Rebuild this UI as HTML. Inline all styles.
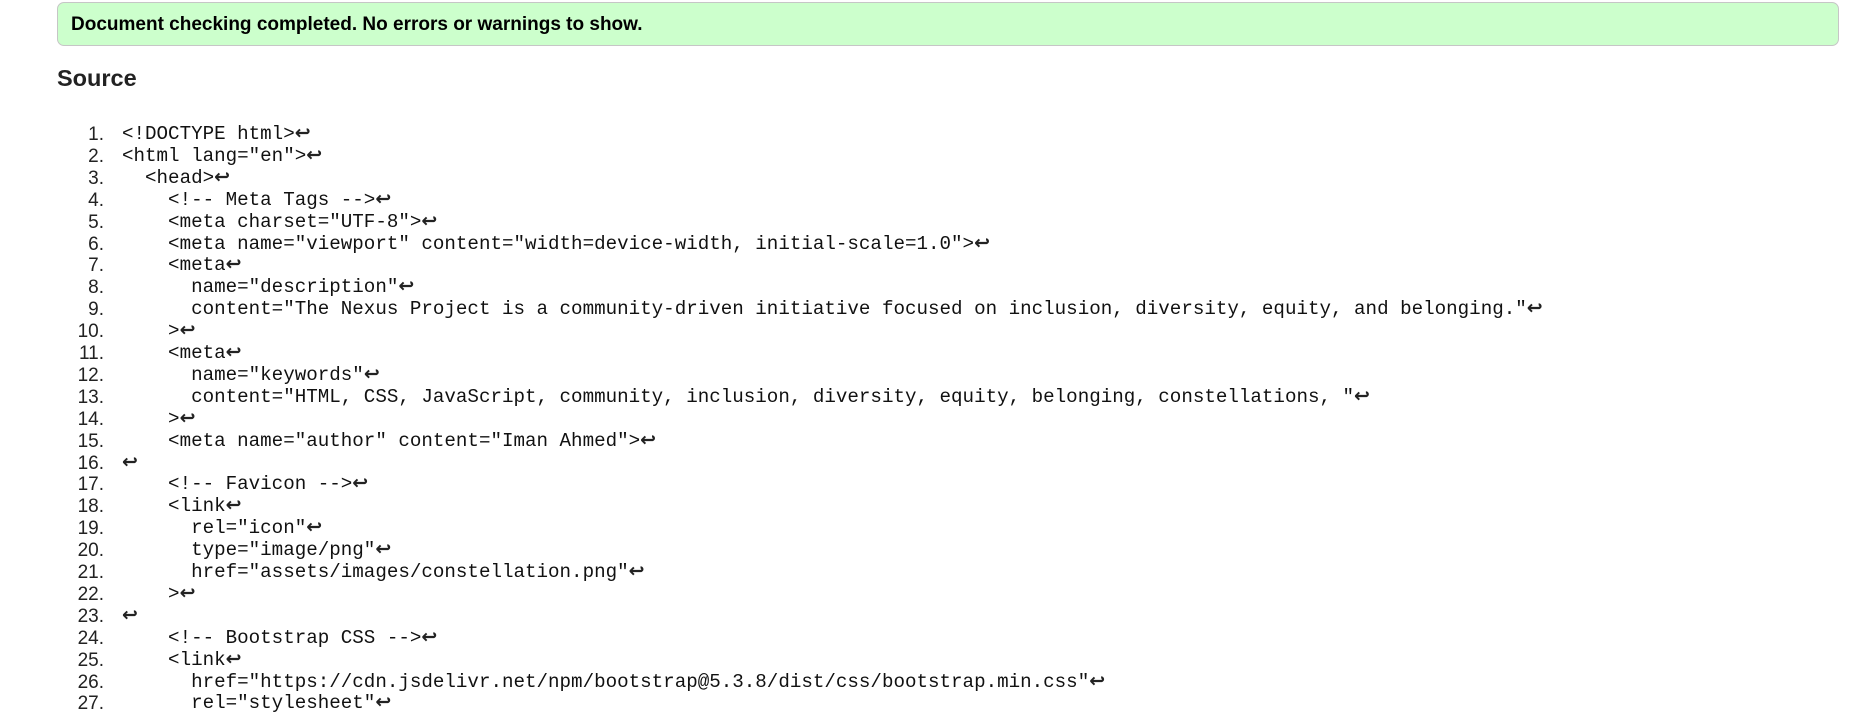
<!DOCTYPE html>
<html><head><meta charset="utf-8"><style>
body{margin:0;width:1857px;height:717px;overflow:hidden;background:#fff;font-family:"Liberation Sans",Arial,sans-serif;color:#222}
.ok{position:absolute;left:57px;top:2px;width:1780px;height:42px;background:#ccffcc;border:1px solid #c6c6c6;border-radius:7px}
.ok b{position:absolute;left:13px;top:11px;font-size:19px;color:#000}
h2{position:absolute;left:57px;top:65px;margin:0;font-size:23.5px;font-weight:bold;color:#222}
.l{position:absolute;left:0;height:22px;line-height:22px;white-space:pre}
.n{position:absolute;left:0;top:2px;width:104px;text-align:right;font-size:19px;line-height:22px;font-family:"Liberation Sans",sans-serif}
.t{position:absolute;left:122px;top:0;line-height:22px;font-family:"Liberation Mono","DejaVu Sans Mono",monospace;font-size:19.2px;color:#111}
.a{font-family:"DejaVu Sans",sans-serif;font-size:19px;line-height:22px;font-weight:bold;color:#222}
</style></head><body>
<div class="ok"><b>Document checking completed. No errors or warnings to show.</b></div>
<h2>Source</h2>
<div id="src"></div>
<script>
var L=['<!DOCTYPE html>','<html lang="en">','  <head>','    <!-- Meta Tags -->','    <meta charset="UTF-8">','    <meta name="viewport" content="width=device-width, initial-scale=1.0">','    <meta','      name="description"','      content="The Nexus Project is a community-driven initiative focused on inclusion, diversity, equity, and belonging."','    >','    <meta','      name="keywords"','      content="HTML, CSS, JavaScript, community, inclusion, diversity, equity, belonging, constellations, "','    >','    <meta name="author" content="Iman Ahmed">','','    <!-- Favicon -->','    <link','      rel="icon"','      type="image/png"','      href="assets/images/constellation.png"','    >','','    <!-- Bootstrap CSS -->','    <link','      href="https://cdn.jsdelivr.net/npm/bootstrap@5.3.8/dist/css/bootstrap.min.css"','      rel="stylesheet"'];
var h='';
for(var i=0;i<L.length;i++){var y=122+i*21.9;var s=L[i].replace(/&/g,'&amp;').replace(/</g,'&lt;').replace(/>/g,'&gt;');
h+='<div class="l" style="top:'+y+'px"><span class="n">'+(i+1)+'.</span><span class="t">'+s+'<span class="a">↩</span></span></div>';}
document.getElementById('src').innerHTML=h;
</script>
</body></html>
